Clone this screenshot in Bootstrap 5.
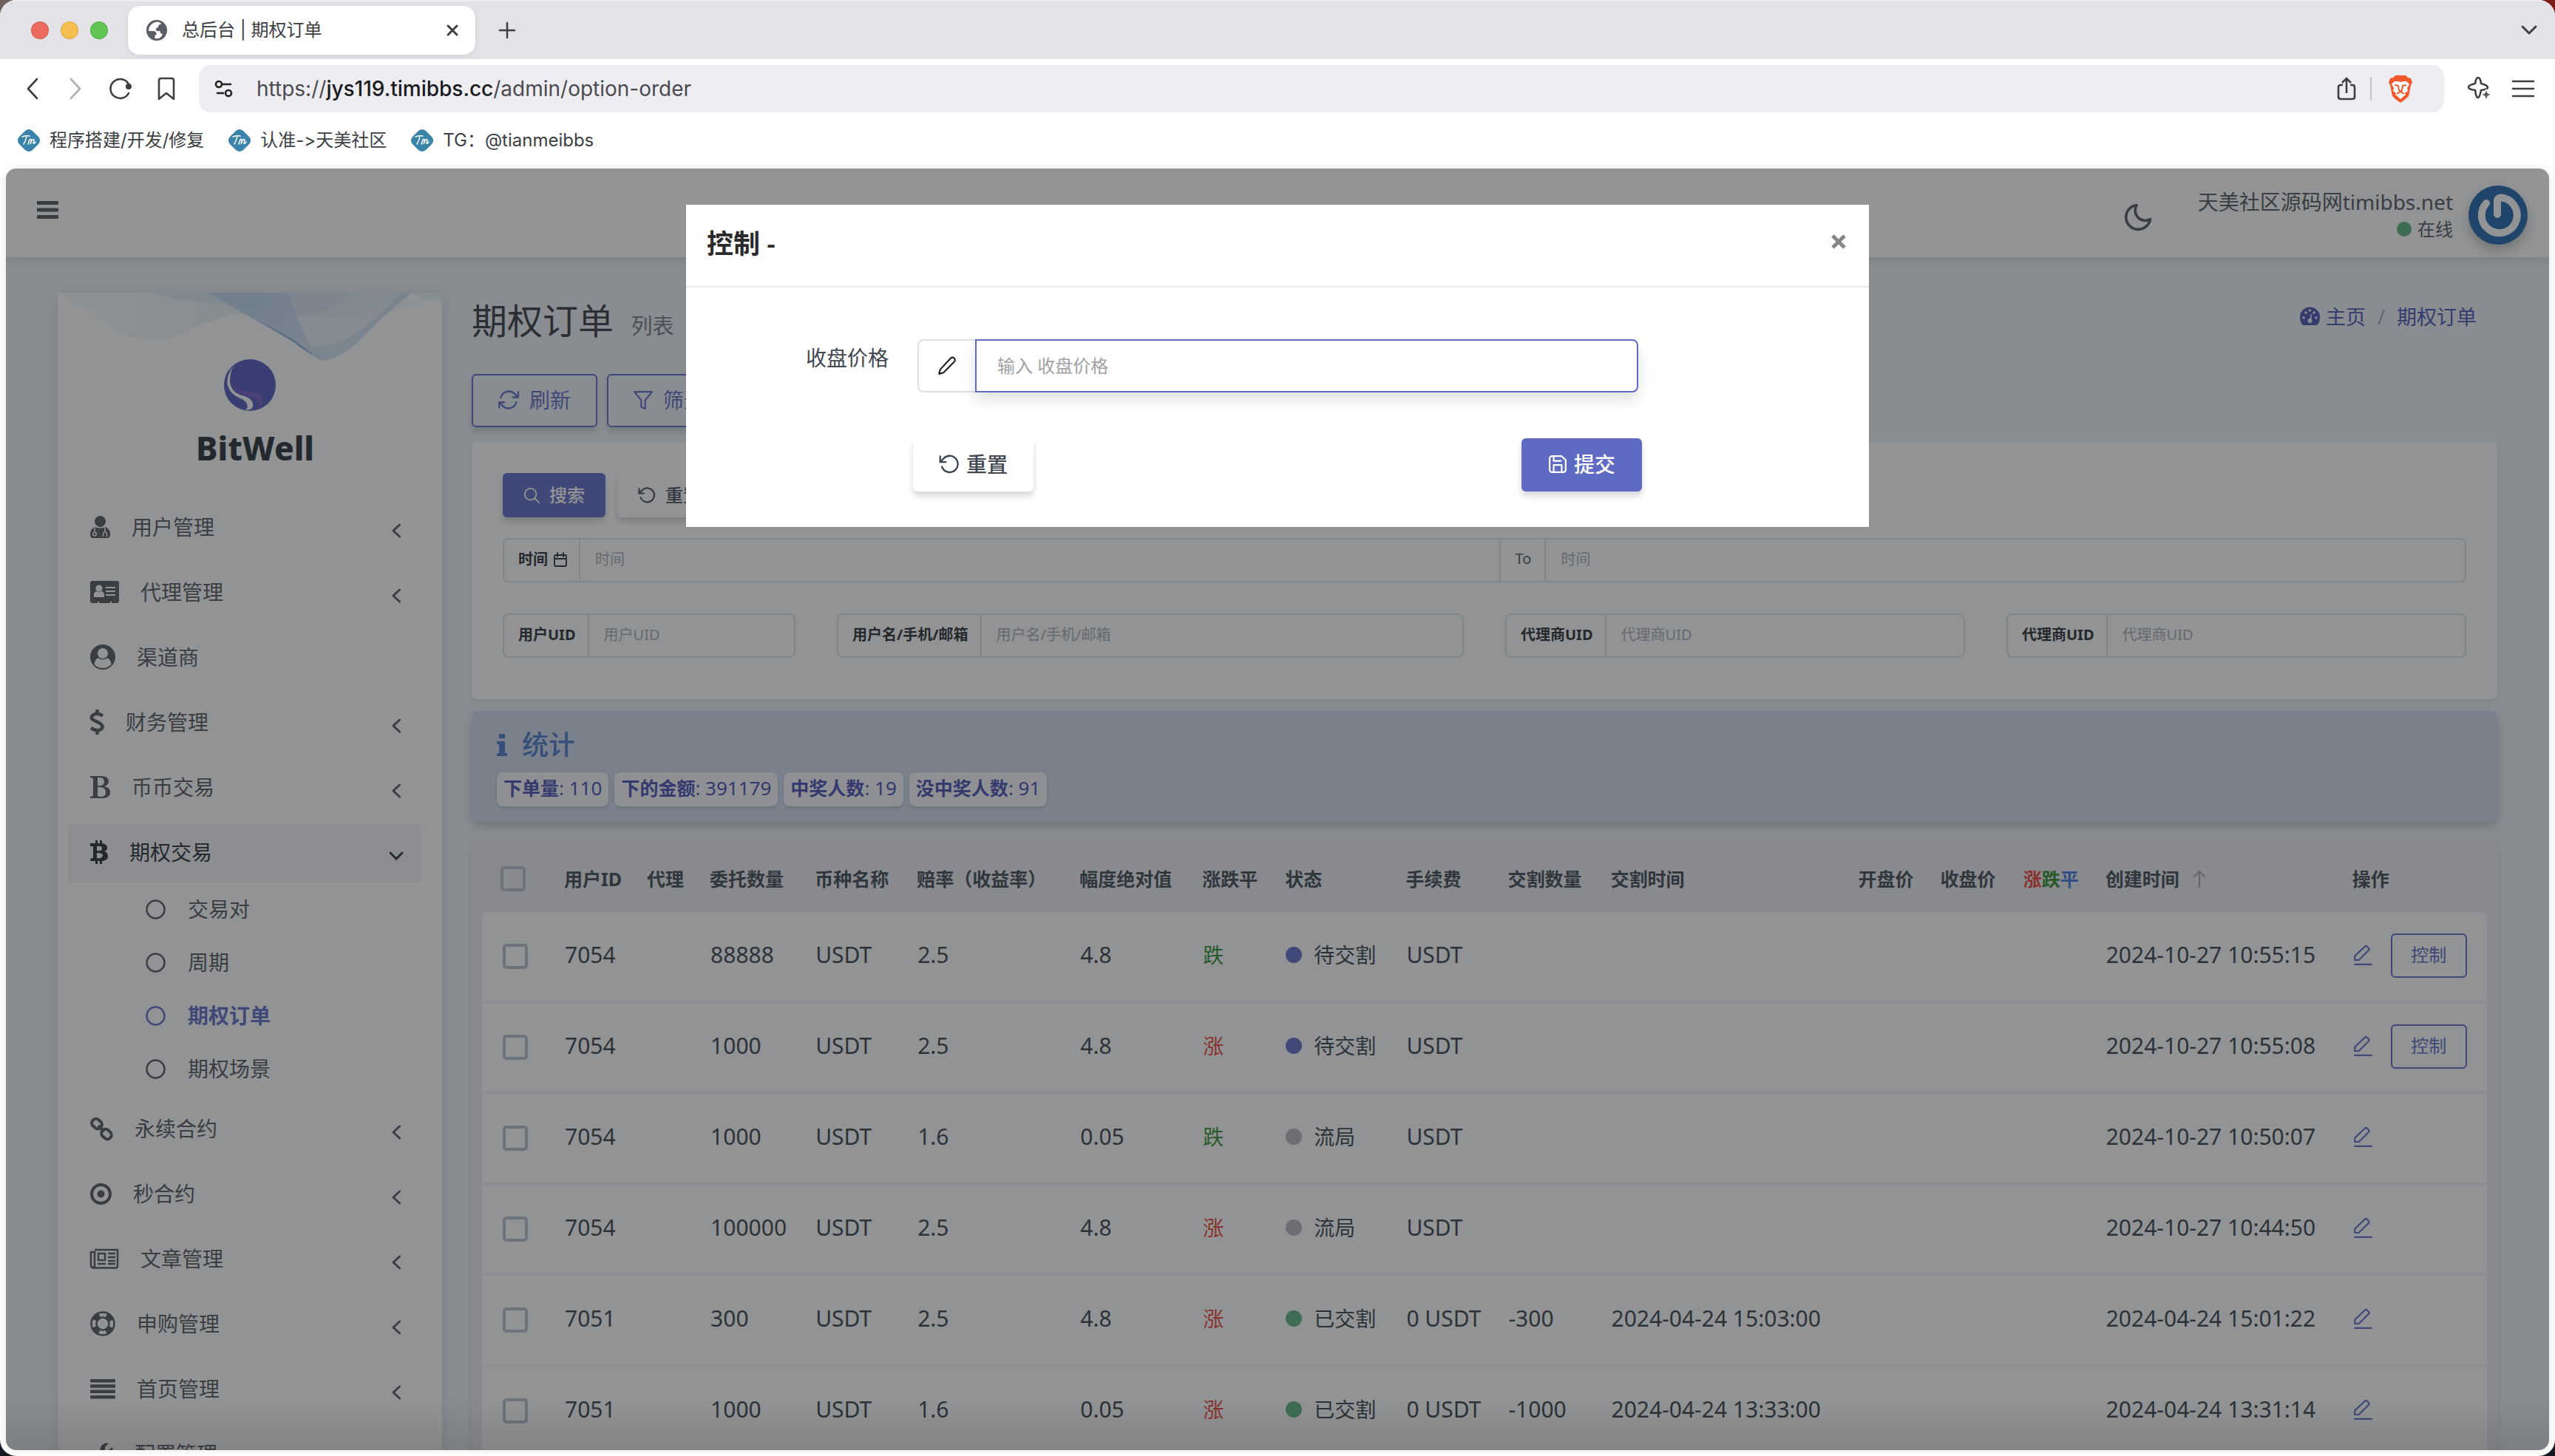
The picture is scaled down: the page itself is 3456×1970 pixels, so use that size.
<!DOCTYPE html>
<html lang="zh-CN">
<head>
<meta charset="utf-8">
<meta name="viewport" content="width=device-width, initial-scale=1">
<title>总后台 | 期权订单</title>
<link rel="stylesheet" href="https://cdn.jsdelivr.net/npm/bootstrap@5.3.0/dist/css/bootstrap.min.css">
<style>
:root{--brand:#5c69c2;--ink:#353d45;--line:#dbe2e5}
html,body{height:100%}
body{margin:0;overflow:hidden;background:linear-gradient(90deg,#6e625e 50%,#7c1d18 50%) top/100% 60px no-repeat,#15181f;font-family:"Noto Sans","Noto Sans CJK SC",sans-serif;font-size:28px;line-height:40px;color:var(--ink)}
svg{display:block;flex:none;overflow:visible}
.ln{fill:none;stroke:currentColor;stroke-width:2;stroke-linecap:round;stroke-linejoin:round}
a{color:inherit;text-decoration:none}
button{font-family:inherit}
.window{height:100vh;background:#fff;border-radius:22px;overflow:hidden}
.ui{font-family:Inter,"Noto Sans CJK SC",sans-serif;color:#3c4043;font-variant-ligatures:none;font-feature-settings:"calt" 0}
.tabstrip{height:80px;background:#e3e2e7;padding:0 20px 0 42px;border-top:2px solid #edecf0}
.light{width:24px;height:24px;border-radius:50%;border:1px solid rgba(0,0,0,.12)}
.tab{width:470px;height:66px;margin-left:27px;background:#fff;border-radius:16px;padding:0 22px 0 25px;font-size:24px;box-shadow:0 2px 6px rgba(0,0,0,.08)}
.bare{border:0;background:none;padding:0;color:inherit;display:flex}
.toolbar{height:80px;padding:0 28px 0 32px}
.address{height:64px;background:#ededf2;border-radius:16px;padding:0 42px 0 20px;margin-left:32px}
.url{font-size:28px;color:#4a4a50;margin-left:30px}
.url b{font-weight:500;color:#1a1a1e}
.bookmarks{height:68px;padding:2px 24px 10px;font-size:24px;gap:33px}
.bookmarks span{margin-left:13px}
.viewport{margin:0 8px 8px;border-radius:14px;overflow:hidden;background:#eff3f7;box-shadow:0 0 12px rgba(0,0,0,.1);min-height:0}
.shade{background:linear-gradient(to top,rgba(0,0,0,.1),transparent 70px),rgba(36,39,44,.5);z-index:5}
.topbar{height:120px;background:#fff;padding:6px 29px 0 42px;box-shadow:0 4px 16px rgba(37,45,51,.14)}
.topbar .fold{color:#50545a;margin-bottom:12px}
.topbar .night{color:#50545a;padding-top:6px}
.on-dot{width:20px;height:20px;border-radius:50%;background:#58b077}
.avatar{width:80px;height:80px;border-radius:50%;background:#1a63a8;box-shadow:0 8px 16px rgba(0,0,0,.25)}
.side{width:520px;margin:48px 40px 0 70px;background:#fff;box-shadow:0 4px 20px rgba(37,45,51,.12)}
.brand{height:278px;padding-top:90px}
.brand strong{font-size:44px;line-height:56px;font-weight:800;color:#232a32;margin-top:22px;padding-left:14px}
.wave{left:0;top:0;width:100%;height:92px}
.menu-row{height:80px;margin:0 28px 8px 14px;padding:0 27px 2px 30px;color:#505256}
.menu-row span{margin-left:29px}
.menu-row .arr{margin-left:auto;margin-top:9px}
.menu-row.is-open{background:#f4f4f6;color:#22282e;margin-bottom:0;border-radius:4px}
.sub-list{padding-bottom:6px}
.sub-row{height:72px;padding-left:119px;color:#505256}
.sub-row span{margin-left:30px}
.sub-row.is-on{color:var(--brand);font-weight:700}
.main{padding:0 70px 0 0}
.title-row{height:158px;padding:20px 28px 0 0}
.title-row h1{font-size:48px;line-height:64px;font-weight:400;margin:0;color:#33363a}
.title-row small{font-size:29px;color:#75797d;margin-left:11px}
.crumbs{font-size:27px;color:#4450b0;padding-bottom:17px}
.btn{font-size:28px;line-height:40px;border-radius:6px;border-width:2px;box-shadow:0 6px 8px rgba(0,0,0,.16)}
.btn-line{height:72px;border-color:var(--brand);color:var(--brand);padding:0 34px 2px 33px;gap:13px}
.btn-search{height:60px;font-size:24px;background:var(--brand);color:#fff;border:0;padding:0 28px;font-weight:500;gap:13px}
.btn-plain{background:#fff;color:#414750;border:0;font-weight:500}
.panel{background:#fff;border-radius:8px;box-shadow:0 4px 8px rgba(37,45,51,.1)}
.filter{margin-top:20px;height:348px;padding:42px 42px 0}
.fgroup{height:60px;border:2px solid var(--line);border-radius:8px;font-size:20px}
.fgroup label,.fgroup .mid{padding:0 16px 2px 19px;border-right:2px solid var(--line);font-weight:700;color:#24282c;display:flex;align-items:center;height:100%;white-space:nowrap}
.fgroup .mid{border-left:2px solid var(--line);font-weight:400;color:#50555a;padding:0 18px 4px 20px}
.fgroup input{border:0;outline:0;background:none;flex:1 1 0;min-width:0;padding:0 20px 2px}
input::placeholder{color:#a8abae;opacity:1}
.filter-row{margin:42px -28px 0}
.filter-row>div{padding:0 28px}
.stats{margin-top:16px;height:150px;background:#d0daed;border-radius:8px;padding:22px 34px;box-shadow:0 6px 14px rgba(37,45,51,.25)}
.stats h2{font-size:36px;line-height:48px;margin:0 0 13px;font-weight:500;color:#4876c4}
.chip{height:46px;background:#f8f8fa;border-radius:8px;padding:0 9px;font-size:26px;line-height:43px;color:#444bb0;box-shadow:0 2px 4px rgba(0,0,0,.16)}
.chip b{font-weight:700;font-size:25px}
.sheet{margin-top:25px;background:#ececf0;border-radius:8px;padding:0 14px;box-shadow:0 4px 16px rgba(37,45,51,.1)}
.orders{table-layout:fixed;width:100%;border-collapse:separate;border-spacing:0}
.orders th{height:97px;padding:6px 0 0 27px;font-size:25px;font-weight:700;color:#3a444c;white-space:nowrap}
.orders th:first-child,.orders td:first-child{padding-left:25px}
.orders td{height:123px;padding:0 0 4px 28px;font-size:30px;white-space:nowrap;background:#fff;border-bottom:3px solid #f2f2f4}
.orders .zh{font-size:28px}
.orders tbody tr:first-child td:first-child{border-top-left-radius:10px}
.orders tbody tr:first-child td:last-child{border-top-right-radius:10px}
.tick{appearance:none;width:34px;height:34px;border:4px solid #b4bfc9;border-radius:5px;display:block;background:none}
.orders td .tick{margin:4px 0 0 3px}
.state{width:22px;height:22px;border-radius:50%;margin-right:16px}
.wait{background:#5f6bc4}.void{background:#b4b4bc}.done{background:#58b27a}
.down{color:#2a8a26}.up{color:#ee3a2c}.flat{color:#3a75d8}
.orders td.down{color:#2a8a26}.orders td.up{color:#ee3a2c}
.act{color:var(--brand)}
.btn-mini{height:60px;width:103px;padding:0 0 2px;font-size:24px;box-shadow:none;border:2px solid var(--brand);color:var(--brand);margin:2px 0 0 25px}
.dialog{position:absolute;z-index:10;top:49px;left:0;right:0;margin:0 auto;width:1600px;max-width:100%;background:#fff}
.dialog-head{height:112px;border-bottom:2px solid #ececec;padding:0 30px 6px 28px;color:#2b2b2b}
.dialog-head h2{font-size:36px;line-height:48px;font-weight:600;margin:0;padding-top:2px}
.dialog-body{padding:70px 312px 48px 162px}
.pgroup{height:72px}
.pgroup .pre{width:78px;border:2px solid #dbe2e5;border-right:0;border-radius:8px 0 0 8px;color:#222}
.pgroup input{border:2px solid #5f6bc2;border-radius:0 8px 8px 0;outline:0;padding:0 28px;font-size:24px;flex:1;min-width:0;box-shadow:0 10px 20px rgba(0,0,0,.12)}
.pgroup input::placeholder{color:#a0a2a4}
.dialog-acts{margin:62px -5px 0 145px}
.btn-dlg{height:72px;width:163px;padding:0 0 3px;border:0;gap:9px}
.btn-go{background:#5f6bc2;color:#fff;font-weight:500}
</style>
</head>
<body>
<svg width="0" height="0" class="position-absolute" aria-hidden="true">
<symbol id="left" viewBox="0 0 14 22"><path class="ln" style="stroke-width:3" d="M11.500 3 3 11l8.500 8"/></symbol>
<symbol id="redo" viewBox="0 0 24 24"><path class="ln" d="M1.500 3v6.500h6.500"/><path class="ln" d="M3.500 15a9.500 9.500 0 1 0 2.200-9.800L1.500 9.500"/></symbol>
<symbol id="pen" viewBox="0 0 24 24"><path class="ln" d="M16.500 2.500a3 3 0 0 1 4.500 4.500L7.500 20.500 2 22l1.500-5.500z"/></symbol>
<symbol id="edit" viewBox="0 0 24 26"><path class="ln" d="M14.500 2.500a2 2 0 0 1 2.800 0l2 2a2 2 0 0 1 0 2.800L7 19.500H2V14.500zM2 25h21"/></symbol>
<symbol id="tm" viewBox="0 0 30 30"><path fill="#3a84aa" d="M10 2q5-4 10 0l8 8q4 5 0 10l-8 8q-5 4-10 0l-8-8q-4-5 0-10z"/><path d="M6 10q5-2 10-1M12 9q-1 6-4 11M14 20l2-6q3-2 2 2l-1 4 2-5q3-3 3 0l-1 4q1 1 3-2" fill="none" stroke="#fff" stroke-width="1.500" stroke-linecap="round"/></symbol>
</svg>

<div class="window d-flex flex-column">
  <header class="ui">
    <div class="tabstrip d-flex align-items-center">
      <div class="d-flex gap-3">
        <i class="light" style="background:#ec6a5e"></i><i class="light" style="background:#f4bf4f"></i><i class="light" style="background:#61c554"></i>
      </div>
      <div class="tab d-flex align-items-center">
        <svg width="28" height="28" viewBox="0 0 28 28"><circle cx="14" cy="14" r="14" fill="#5a5e64"/><path fill="#fff" d="M14 2.500Q6 4 3.500 11q-1 3 0 4h7q3 1 3 4 0 2-2 2v4q6 1 9-3 1-3 2-3-4 0-4-4h-4q-3-2-1-4 3-1 3-4l4-2q-3-3-6.500-2.500z"/></svg>
        <span class="ms-3 ps-1">总后台 | 期权订单</span>
        <button class="bare ms-auto" aria-label="关闭标签"><svg width="18" height="18" viewBox="0 0 18 18" class="ln"><path style="stroke-width:3" d="m3 3 12 12M15 3 3 15"/></svg></button>
      </div>
      <button class="bare ms-4 ps-2" aria-label="新标签"><svg width="22" height="22" viewBox="0 0 22 22" class="ln"><path style="stroke-width:2.500" d="M11 1v20M1 11h20"/></svg></button>
      <button class="bare ms-auto" aria-label="标签列表"><svg width="32" height="22" viewBox="0 0 32 22" class="ln"><path style="stroke-width:3" d="m8 6 9 9 9-9"/></svg></button>
    </div>
    <div class="toolbar d-flex align-items-center">
      <div class="d-flex align-items-center justify-content-between" style="width:205px">
        <button class="bare" aria-label="后退"><svg width="24" height="28" viewBox="0 0 24 28" class="ln"><path style="stroke-width:2.600" d="M18 1 6 14l12 13"/></svg></button>
        <button class="bare" aria-label="前进"><svg width="24" height="28" viewBox="0 0 24 28" class="ln" opacity=".4"><path style="stroke-width:2.600" d="m6 1 12 13L6 27"/></svg></button>
        <button class="bare" aria-label="刷新页面"><svg width="32" height="30" viewBox="0 0 32 30" class="ln"><path style="stroke-width:2.600" d="M27 21a13 13 0 1 1 0-12"/><circle cx="27" cy="12" r="3" fill="currentColor"/></svg></button>
        <button class="bare" aria-label="书签"><svg width="24" height="30" viewBox="0 0 24 30" class="ln"><path style="stroke-width:2.600" d="M2 29V4q0-3 3-3h14q3 0 3 3v25l-10-8z"/></svg></button>
      </div>
      <div class="address d-flex align-items-center flex-grow-1">
        <svg width="28" height="24" viewBox="0 0 28 24" fill="none" stroke="#222" stroke-width="2.600"><circle cx="7" cy="6" r="4"/><path d="M12 6h12M4 18h10"/><circle cx="20" cy="18" r="4"/></svg>
        <span class="url">https://<b>jys119.timibbs.cc</b>/admin/option-order</span>
        <svg class="ms-auto" width="26" height="32" viewBox="0 0 26 32" fill="none" stroke="#3c4043" stroke-width="2.600"><path d="M8 11H5q-3 0-3 3v13q0 3 3 3h16q3 0 3-3V14q0-3-3-3h-3M13 22V2M7 8l6-6 6 6"/></svg>
        <i style="width:2px;height:32px;background:#c4c4ca;margin:0 22px 0 19px"></i>
        <svg width="34" height="38" viewBox="0 0 34 38"><path fill="#f1592a" d="M10 1h14l3 3 4 1 2 6-2 3-3 15-4 4-7 5-7-5-4-4L3 14 1 11l2-6 4-1z"/><path fill="#fff" d="M9 9h4l4 1 4-1h4l4 4-3 5 1 4-4 3 1 2-7 6-7-6 1-2-4-3 1-4-3-5z"/><path d="m9 14 5 1 1 6 2 2 2-2 1-6 5-1M12 26l5-3 5 3" fill="none" stroke="#f1592a" stroke-width="2"/></svg>
      </div>
      <button class="bare ms-4 ps-2" aria-label="助手"><svg width="32" height="32" viewBox="0 0 32 32" class="ln"><path style="stroke-width:2.600" d="M14 1q3 0 4 8 8 2 9 5 0 3-9 4-2 10-4 10-3 0-4-10-9-1-9-4 0-3 9-5 1-8 4-8z"/><path fill="#5a5e64" stroke="#fff" stroke-width="1" d="m25 17 2 5 5 2-5 2-2 6-2-6-5-2 5-2z"/></svg></button>
      <button class="bare ms-4 ps-1" aria-label="菜单"><svg width="30" height="24" viewBox="0 0 30 24" class="ln"><path style="stroke-width:2.600" d="M1 2h28M1 12h28M1 22h28"/></svg></button>
    </div>
    <nav class="bookmarks d-flex align-items-center">
      <a href="#" class="d-flex align-items-center"><svg width="30" height="30"><use href="#tm"/></svg><span>程序搭建/开发/修复</span></a>
      <a href="#" class="d-flex align-items-center"><svg width="30" height="30"><use href="#tm"/></svg><span>认准-&gt;天美社区</span></a>
      <a href="#" class="d-flex align-items-center"><svg width="30" height="30"><use href="#tm"/></svg><span>TG：@tianmeibbs</span></a>
    </nav>
  </header>

  <div class="viewport position-relative flex-grow-1">
    <header class="topbar d-flex align-items-center position-relative">
      <button class="bare fold" aria-label="折叠菜单"><svg width="29" height="26" viewBox="0 0 29 26" fill="currentColor"><rect width="29" height="5" rx="1"/><rect y="9.500" width="29" height="5" rx="1"/><rect y="19" width="29" height="5" rx="1"/></svg></button>
      <button class="bare night ms-auto" aria-label="夜间模式"><svg width="44" height="44" viewBox="0 0 24 24" class="ln"><path d="M21 13.500A9 9 0 1 1 11 3a7.500 7.500 0 0 0 10 10.500z"/></svg></button>
      <div class="text-end" style="margin:0 21px 0 59px;color:#505256">
        <div style="font-size:28px;line-height:38px">天美社区源码网timibbs.net</div>
        <div class="d-flex align-items-center justify-content-end gap-2" style="font-size:24px;line-height:36px"><i class="on-dot"></i>在线</div>
      </div>
      <div class="avatar"><svg width="80" height="80" viewBox="0 0 80 80" fill="none" stroke="#fff" stroke-width="10" stroke-linecap="round"><path d="M24 24a24 24 0 1 0 24-7q-9-2-9 4v18"/></svg></div>
    </header>

    <div class="d-flex align-items-stretch">
      <aside class="side position-relative flex-shrink-0">
        <svg class="wave position-absolute" viewBox="0 0 520 92" preserveAspectRatio="none">
          <defs>
          <linearGradient id="w1" x1="0" x2="1"><stop offset="0" stop-color="#e6f3f4" stop-opacity=".3"/><stop offset=".5" stop-color="#e0eff1" stop-opacity=".8"/><stop offset="1" stop-color="#dcedf3" stop-opacity=".1"/></linearGradient>
          <linearGradient id="w2" x1="0" x2="1" y1="0" y2="1"><stop offset="0" stop-color="#b0cde8"/><stop offset="1" stop-color="#c9dcf0"/></linearGradient>
          <linearGradient id="w3" x1="0" x2="1" y1="0" y2="1"><stop offset="0" stop-color="#7fa9d8" stop-opacity="0"/><stop offset=".8" stop-color="#7fa9d8"/><stop offset="1" stop-color="#7fa9d8" stop-opacity="0"/></linearGradient></defs>
          <path fill="url(#w1)" d="M3 0q40 26 75 50 40 20 82 9 60-30 90-31 150 10 190 0 50-10 80-24V0z"/>
          <path fill="#c9ddf0" opacity=".5" d="M130 0q55 17 100 13l-25-13z"/>
          <path fill="url(#w2)" opacity=".85" d="M203 0h107q12 26 20 48 8 20 22 37 4 5 8 7-4 0-12-6Q280 38 203 0z"/>
          <path fill="#c8dcf0" opacity=".5" d="M225 13q50 25 110 19 30-4 70-32H205z"/>
          <path fill="#d4e2f2" opacity=".6" d="M310 0h168q-40 34-65 60-28 28-53 32-20-12-30-44T310 0z"/>
          <path fill="#bfd6ee" opacity=".5" d="M478 0q-40 34-65 60-28 28-53 32-10-2-16-20 40 0 70-24 26-22 50-48z"/>
          <path fill="none" stroke="url(#w3)" stroke-width="2.500" d="M205 1q80 44 115 65 25 20 38 24"/>
          <path fill="none" stroke="#f2efee" stroke-width="1.500" opacity=".7" d="M358 74q45-6 82-60"/>
          <path fill="#dceef3" opacity=".6" d="M478 0q20 10 42 13V0z"/>
        </svg>
        <div class="brand d-flex flex-column align-items-center position-relative">
          <svg width="70" height="70" viewBox="0 0 70 70"><circle cx="35" cy="35" r="35" fill="#4c55b6"/><path fill="#7558c0" d="M8.500 31q6 12 28 13 16 2 16 11 0 6-5 11 1-12-12-16-22-4-27-19z"/><path fill="#fff" d="M14 8Q2 22 5 36q4 12 17 17 9 3 10 12-1 2-3 4 14 0 9-12-4-6-14-8Q9 44 8 30q0-14 6-22z"/></svg>
          <strong>BitWell</strong>
        </div>
        <nav>
          <a href="#" class="menu-row d-flex align-items-center"><svg width="27" height="30" viewBox="0 0 27 30"><circle cx="13.500" cy="7.500" r="7.500" fill="currentColor"/><path fill="currentColor" d="M6 15q7.500 3 15 0 6 3 6 10 0 5-4 5H4q-4 0-4-5 0-7 6-10z"/><path d="M6 15.500v6M17.500 28v-4q2.500-5 5 0v4M20 21.500v-6" stroke="#fff" stroke-width="1.500" fill="none"/><circle cx="6" cy="24.500" r="2.300" fill="none" stroke="#fff" stroke-width="1.500"/></svg><span>用户管理</span><svg class="arr" width="14" height="22"><use href="#left"/></svg></a>
          <a href="#" class="menu-row d-flex align-items-center"><svg width="39" height="30" viewBox="0 0 39 30"><rect width="39" height="30" rx="3" fill="currentColor"/><g fill="#fff"><circle cx="12" cy="10" r="4.500"/><path d="M5 22v-4q1-4 4-4 3 2 6 0 3 0 4 4v4zM21 8h13v2H21zM21 13h13v2H21zM21 18h13v2H21zM10 28h2v2h-2zM27 28h2v2h-2z"/></g></svg><span>代理管理</span><svg class="arr" width="14" height="22"><use href="#left"/></svg></a>
          <a href="#" class="menu-row d-flex align-items-center"><svg width="34" height="34" viewBox="0 0 34 34"><circle cx="17" cy="17" r="17" fill="currentColor"/><g fill="#fff"><path d="M5.500 27q1-8 5.500-8.500 6 4 12 0 4.500.5 5.500 8.500-4.500 5-11.500 5T5.500 27z"/><ellipse cx="17" cy="12" rx="7.500" ry="7.500" stroke="#505256" stroke-width="1"/></g></svg><span>渠道商</span></a>
          <a href="#" class="menu-row d-flex align-items-center"><svg width="19" height="34" viewBox="0 0 19 34" fill="none" stroke="currentColor" stroke-width="4.500"><path d="M17 8.500Q9 3.500 4 7.500t1 7l8 4q6 4 2 8-5 4-14-1.500M9.500 0v6M9.500 28v6"/></svg><span>财务管理</span><svg class="arr" width="14" height="22"><use href="#left"/></svg></a>
          <a href="#" class="menu-row d-flex align-items-center"><svg width="27" height="30" viewBox="0 0 27 30"><path fill="currentColor" fill-rule="evenodd" d="M0 0h14q11 0 11 7 0 5-6 7 8 1 8 8 0 8-12 8H0v-2l4-1V3L0 2zM10 2v11q9 1 9-5 0-6-6-6zM10 15v12q1 1 4 1 7 0 7-6 0-7-8-7z"/></svg><span>币币交易</span><svg class="arr" width="14" height="22"><use href="#left"/></svg></a>
          <a href="#" class="menu-row is-open d-flex align-items-center"><svg width="24" height="32" viewBox="0 0 24 32"><path fill="currentColor" fill-rule="evenodd" d="M0 4h7V0h3v4h3V0h3v4q7 1 7 6 0 4-4 5 5 1 5 7 0 5-8 6v4h-3v-4h-3v4H7v-4H0l1-4h3V8H0zM9 8v6q7 1 7-3T9 8zM9 17v7q8 1 8-4 0-3-8-3z"/></svg><span>期权交易</span><svg class="arr" style="margin-right:-4px" width="22" height="14" viewBox="0 0 22 14"><path class="ln" style="stroke-width:3" d="m3 3 8 8 8-8"/></svg></a>
          <div class="sub-list">
            <a href="#" class="sub-row d-flex align-items-center"><svg width="27" height="27"><circle cx="13.500" cy="13.500" r="12" class="ln" style="stroke-width:2.500"/></svg><span>交易对</span></a>
            <a href="#" class="sub-row d-flex align-items-center"><svg width="27" height="27"><circle cx="13.500" cy="13.500" r="12" class="ln" style="stroke-width:2.500"/></svg><span>周期</span></a>
            <a href="#" class="sub-row is-on d-flex align-items-center"><svg width="27" height="27"><circle cx="13.500" cy="13.500" r="12" class="ln" style="stroke-width:2.500"/></svg><span>期权订单</span></a>
            <a href="#" class="sub-row d-flex align-items-center"><svg width="27" height="27"><circle cx="13.500" cy="13.500" r="12" class="ln" style="stroke-width:2.500"/></svg><span>期权场景</span></a>
          </div>
          <a href="#" class="menu-row d-flex align-items-center"><svg width="31" height="31" viewBox="0 0 31 31" fill="none" stroke="currentColor" stroke-width="4"><rect x="2" y="3" width="14" height="11" rx="5" transform="rotate(42 9 8.500)"/><rect x="15" y="17" width="14" height="11" rx="5" transform="rotate(42 22 22.500)"/><path d="m11 11 8 8"/></svg><span>永续合约</span><svg class="arr" width="14" height="22"><use href="#left"/></svg></a>
          <a href="#" class="menu-row d-flex align-items-center"><svg width="29" height="29"><circle cx="14.500" cy="14.500" r="12.500" fill="none" stroke="currentColor" stroke-width="4"/><circle cx="14.500" cy="14.500" r="5" fill="currentColor"/></svg><span>秒合约</span><svg class="arr" width="14" height="22"><use href="#left"/></svg></a>
          <a href="#" class="menu-row d-flex align-items-center"><svg width="39" height="27" viewBox="0 0 39 27" fill="none" stroke="currentColor" stroke-width="2.500"><path d="M6 1h31v22q0 2.500-2.500 2.500H4Q1 25 1 22V4h5v18q0 3-2 3"/><path d="M11 6h9v9h-9zM24 6h10M24 11h10M24 16h10M10 20h11M24 20h10"/></svg><span>文章管理</span><svg class="arr" width="14" height="22"><use href="#left"/></svg></a>
          <a href="#" class="menu-row d-flex align-items-center"><svg width="34" height="34" viewBox="0 0 34 34" fill="none" stroke="currentColor"><circle cx="17" cy="17" r="15.500" stroke-width="2.500"/><circle cx="17" cy="17" r="8.500" stroke-width="2.500"/><circle cx="17" cy="17" r="12" stroke-width="9" stroke-dasharray="9.400 9.450" stroke-dashoffset="-4.700"/></svg><span>申购管理</span><svg class="arr" width="14" height="22"><use href="#left"/></svg></a>
          <a href="#" class="menu-row d-flex align-items-center"><svg width="34" height="27" viewBox="0 0 34 27" fill="currentColor"><rect width="34" height="4.500" rx="1"/><rect y="7.300" width="34" height="4.500" rx="1"/><rect y="14.600" width="34" height="4.500" rx="1"/><rect y="22" width="34" height="4.500" rx="1"/></svg><span>首页管理</span><svg class="arr" width="14" height="22"><use href="#left"/></svg></a>
          <a href="#" class="menu-row d-flex align-items-center"><svg width="31" height="31" viewBox="0 0 31 31" fill="currentColor"><path d="M30 6a9 9 0 0 1-12 11L7 29q-3 2-5 0t0-5l12-11A9 9 0 0 1 25 1l-5 5v4h5z"/></svg><span>配置管理</span></a>
        </nav>
      </aside>

      <main class="main flex-grow-1">
        <div class="title-row d-flex align-items-center">
          <h1>期权订单 <small>列表</small></h1>
          <nav class="crumbs d-flex align-items-center ms-auto">
            <a href="#" class="d-flex align-items-center"><svg width="27" height="27" viewBox="0 0 27 27"><path fill="currentColor" d="M0 14a13.500 13.500 0 0 1 27 0q0 6-3 10-1 1-2 1H5q-1 0-2-1-3-4-3-10z"/><g fill="#eff3f7"><circle cx="5" cy="15" r="1.800"/><circle cx="8" cy="8" r="1.800"/><circle cx="13.500" cy="5" r="1.800"/><circle cx="19" cy="8" r="1.800"/><circle cx="22" cy="15" r="1.800"/><circle cx="13.500" cy="19" r="3"/><path d="m13 18 2-9 1 1-1 9z"/></g></svg><span class="ms-2">主页</span></a>
            <span class="mx-3" style="color:#a4abb4">/</span><a href="#">期权订单</a>
          </nav>
        </div>
        <div class="d-flex" style="gap:13px">
          <button class="btn btn-line d-flex align-items-center"><svg width="30" height="28" viewBox="0 0 24 24" class="ln"><path d="M23 3v6h-6M1 21v-6h6M3 9.500A9.500 9.500 0 0 1 19 5l4 4M1 15l4 4a9.500 9.500 0 0 0 16-4.500"/></svg>刷新</button>
          <button class="btn btn-line d-flex align-items-center"><svg width="28" height="26" viewBox="0 0 24 24" class="ln"><path d="M23 2H1l8.500 10.500v8.500l5 2V12.500z"/></svg>筛选</button>
        </div>
        <form class="filter panel">
          <div class="d-flex gap-3">
            <button type="button" class="btn btn-search d-flex align-items-center"><svg width="22" height="22" viewBox="0 0 24 24" class="ln"><circle cx="10.500" cy="10.500" r="8.500"/><path d="m17 17 6 6"/></svg>搜索</button>
            <button type="reset" class="btn btn-search btn-plain d-flex align-items-center"><svg width="24" height="24"><use href="#redo"/></svg>重置</button>
          </div>
          <div class="fgroup d-flex align-items-center" style="margin-top:28px">
            <label for="t1">时间<svg class="ms-2" width="18" height="20" viewBox="0 0 18 20"><path class="ln" style="stroke-width:1.800" d="M3 4h12q2 0 2 2v11q0 2-2 2H3q-2 0-2-2V6q0-2 2-2zM1 9h16M5 1v5M13 1v5"/></svg></label>
            <input id="t1" placeholder="时间"><span class="mid">To</span><input id="t2" aria-label="结束时间" placeholder="时间">
          </div>
          <div class="row g-0 filter-row">
            <div class="col-2"><div class="fgroup d-flex align-items-center"><label for="u1">用户UID</label><input id="u1" placeholder="用户UID"></div></div>
            <div class="col-4"><div class="fgroup d-flex align-items-center"><label for="u2">用户名/手机/邮箱</label><input id="u2" placeholder="用户名/手机/邮箱"></div></div>
            <div class="col-3"><div class="fgroup d-flex align-items-center"><label for="u3">代理商UID</label><input id="u3" placeholder="代理商UID"></div></div>
            <div class="col-3"><div class="fgroup d-flex align-items-center"><label for="u4">代理商UID</label><input id="u4" placeholder="代理商UID"></div></div>
          </div>
        </form>
        <section class="stats">
          <h2 class="d-flex align-items-center"><svg width="14" height="30" viewBox="0 0 14 30" fill="currentColor"><rect x="3" width="8" height="6" rx="1"/><path d="M1 10h10v16h2q1 0 1 1v3H0v-3q0-1 1-1h2V14H1q-1 0-1-1v-2q0-1 1-1z"/></svg><span class="ms-3 ps-1">统计</span></h2>
          <div class="d-flex gap-2"><span class="chip"><b>下单量</b>: 110</span><span class="chip"><b>下的金额</b>: 391179</span><span class="chip"><b>中奖人数</b>: 19</span><span class="chip"><b>没中奖人数</b>: 91</span></div>
        </section>
        <section class="sheet">
          <table class="orders">
            <colgroup><col style="width:84px"><col style="width:112px"><col style="width:85px"><col style="width:142px"><col style="width:138px"><col style="width:220px"><col style="width:166px"><col style="width:112px"><col style="width:163px"><col style="width:138px"><col style="width:139px"><col style="width:335px"><col style="width:111px"><col style="width:112px"><col style="width:111px"><col style="width:334px"><col style="width:209px"></colgroup>
            <thead><tr><th><input type="checkbox" class="tick" aria-label="全选"></th><th>用户ID</th><th>代理</th><th>委托数量</th><th>币种名称</th><th>赔率（收益率）</th><th>幅度绝对值</th><th>涨跌平</th><th>状态</th><th>手续费</th><th>交割数量</th><th>交割时间</th><th>开盘价</th><th>收盘价</th><th><span class="up">涨</span><span class="down">跌</span><span class="flat">平</span></th><th><span class="d-flex align-items-center">创建时间<svg class="ms-3" width="22" height="24" viewBox="0 0 18 24" style="color:#a0a4aa"><path class="ln" d="M9 23V2M2 9l7-7 7 7"/></svg></span></th><th>操作</th></tr></thead>
            <tbody>
              <tr><td><input type="checkbox" class="tick" aria-label="选择"></td><td>7054</td><td></td><td>88888</td><td>USDT</td><td>2.5</td><td>4.8</td><td class="zh down">跌</td><td class="zh"><span class="d-flex align-items-center"><i class="state wait"></i>待交割</span></td><td>USDT</td><td></td><td></td><td></td><td></td><td></td><td>2024-10-27 10:55:15</td><td><span class="d-flex align-items-center"><a href="#" class="act" aria-label="编辑"><svg width="26" height="28"><use href="#edit"/></svg></a><button class="btn btn-mini">控制</button></span></td></tr>
              <tr><td><input type="checkbox" class="tick" aria-label="选择"></td><td>7054</td><td></td><td>1000</td><td>USDT</td><td>2.5</td><td>4.8</td><td class="zh up">涨</td><td class="zh"><span class="d-flex align-items-center"><i class="state wait"></i>待交割</span></td><td>USDT</td><td></td><td></td><td></td><td></td><td></td><td>2024-10-27 10:55:08</td><td><span class="d-flex align-items-center"><a href="#" class="act" aria-label="编辑"><svg width="26" height="28"><use href="#edit"/></svg></a><button class="btn btn-mini">控制</button></span></td></tr>
              <tr><td><input type="checkbox" class="tick" aria-label="选择"></td><td>7054</td><td></td><td>1000</td><td>USDT</td><td>1.6</td><td>0.05</td><td class="zh down">跌</td><td class="zh"><span class="d-flex align-items-center"><i class="state void"></i>流局</span></td><td>USDT</td><td></td><td></td><td></td><td></td><td></td><td>2024-10-27 10:50:07</td><td><a href="#" class="act" aria-label="编辑"><svg width="26" height="28"><use href="#edit"/></svg></a></td></tr>
              <tr><td><input type="checkbox" class="tick" aria-label="选择"></td><td>7054</td><td></td><td>100000</td><td>USDT</td><td>2.5</td><td>4.8</td><td class="zh up">涨</td><td class="zh"><span class="d-flex align-items-center"><i class="state void"></i>流局</span></td><td>USDT</td><td></td><td></td><td></td><td></td><td></td><td>2024-10-27 10:44:50</td><td><a href="#" class="act" aria-label="编辑"><svg width="26" height="28"><use href="#edit"/></svg></a></td></tr>
              <tr><td><input type="checkbox" class="tick" aria-label="选择"></td><td>7051</td><td></td><td>300</td><td>USDT</td><td>2.5</td><td>4.8</td><td class="zh up">涨</td><td class="zh"><span class="d-flex align-items-center"><i class="state done"></i>已交割</span></td><td>0 USDT</td><td>-300</td><td>2024-04-24 15:03:00</td><td></td><td></td><td></td><td>2024-04-24 15:01:22</td><td><a href="#" class="act" aria-label="编辑"><svg width="26" height="28"><use href="#edit"/></svg></a></td></tr>
              <tr><td><input type="checkbox" class="tick" aria-label="选择"></td><td>7051</td><td></td><td>1000</td><td>USDT</td><td>1.6</td><td>0.05</td><td class="zh up">涨</td><td class="zh"><span class="d-flex align-items-center"><i class="state done"></i>已交割</span></td><td>0 USDT</td><td>-1000</td><td>2024-04-24 13:33:00</td><td></td><td></td><td></td><td>2024-04-24 13:31:14</td><td><a href="#" class="act" aria-label="编辑"><svg width="26" height="28"><use href="#edit"/></svg></a></td></tr>
            </tbody>
          </table>
        </section>
      </main>
    </div>

    <div class="shade position-absolute top-0 start-0 w-100 h-100"></div>
    <div class="dialog" role="dialog" aria-labelledby="dlg-title">
      <div class="dialog-head d-flex align-items-center">
        <h2 id="dlg-title">控制 -</h2>
        <button class="bare ms-auto pb-1" aria-label="关闭" style="color:#848688"><svg width="22" height="22" viewBox="0 0 22 22"><path class="ln" style="stroke-width:5;stroke-linecap:butt" d="m3 3 16 16M19 3 3 19"/></svg></button>
      </div>
      <form class="dialog-body">
        <div class="d-flex">
          <label for="price" style="width:151px;padding-top:5px;flex:none;color:#414750">收盘价格</label>
          <div class="pgroup d-flex flex-grow-1"><span class="pre d-flex align-items-center justify-content-center"><svg width="26" height="26"><use href="#pen"/></svg></span><input id="price" placeholder="输入 收盘价格"></div>
        </div>
        <div class="dialog-acts d-flex justify-content-between">
          <button type="reset" class="btn btn-plain btn-dlg d-flex align-items-center justify-content-center"><svg width="28" height="28"><use href="#redo"/></svg>重置</button>
          <button type="button" class="btn btn-go btn-dlg d-flex align-items-center justify-content-center"><svg width="26" height="26" viewBox="0 0 24 24" class="ln"><path d="M19 22H5a3 3 0 0 1-3-3V5a3 3 0 0 1 3-3h12l5 5v12a3 3 0 0 1-3 3zM17 22v-9H7v9M7 2v6h9"/></svg>提交</button>
        </div>
      </form>
    </div>
  </div>
</div>
<script src="https://cdn.jsdelivr.net/npm/bootstrap@5.3.0/dist/js/bootstrap.bundle.min.js"></script>
</body>
</html>
